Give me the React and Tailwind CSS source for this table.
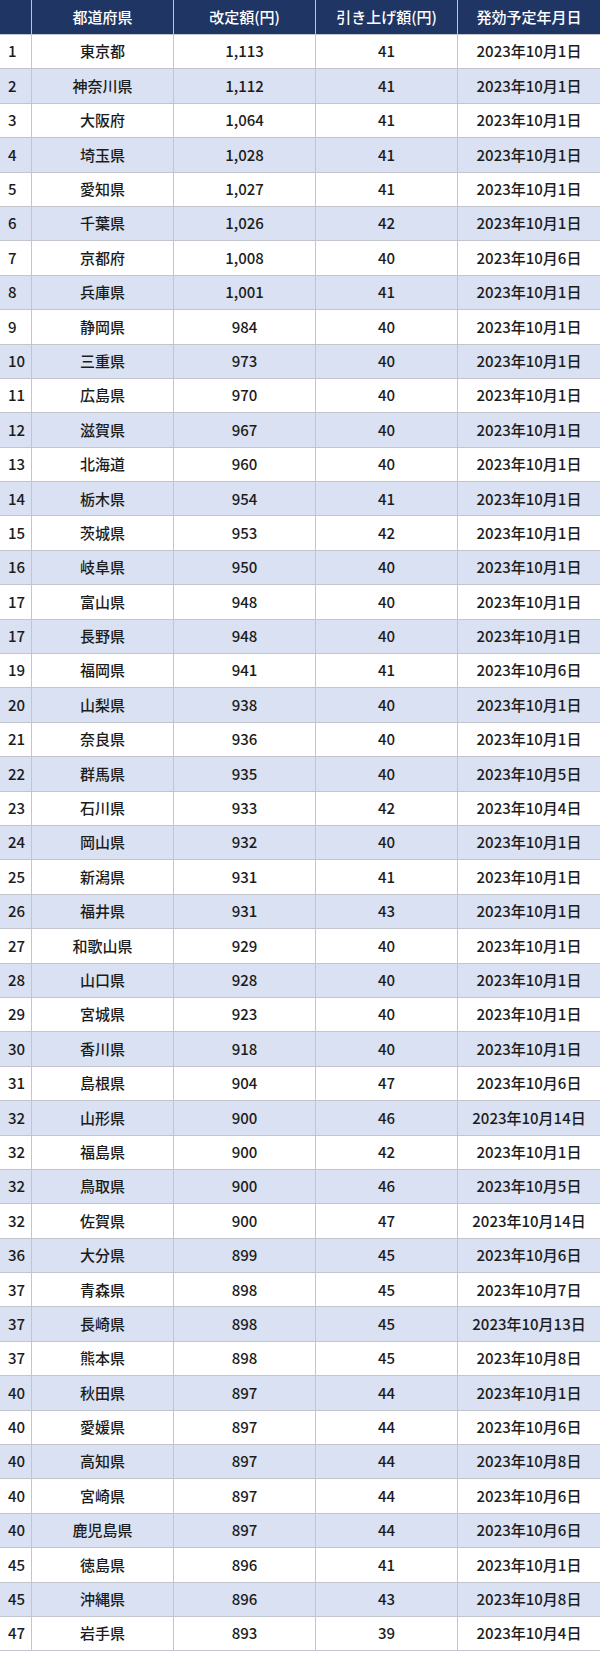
import React from "react";

const rows = [
  ["1", "東京都", "1,113", "41", "1"],
  ["2", "神奈川県", "1,112", "41", "1"],
  ["3", "大阪府", "1,064", "41", "1"],
  ["4", "埼玉県", "1,028", "41", "1"],
  ["5", "愛知県", "1,027", "41", "1"],
  ["6", "千葉県", "1,026", "42", "1"],
  ["7", "京都府", "1,008", "40", "6"],
  ["8", "兵庫県", "1,001", "41", "1"],
  ["9", "静岡県", "984", "40", "1"],
  ["10", "三重県", "973", "40", "1"],
  ["11", "広島県", "970", "40", "1"],
  ["12", "滋賀県", "967", "40", "1"],
  ["13", "北海道", "960", "40", "1"],
  ["14", "栃木県", "954", "41", "1"],
  ["15", "茨城県", "953", "42", "1"],
  ["16", "岐阜県", "950", "40", "1"],
  ["17", "富山県", "948", "40", "1"],
  ["17", "長野県", "948", "40", "1"],
  ["19", "福岡県", "941", "41", "6"],
  ["20", "山梨県", "938", "40", "1"],
  ["21", "奈良県", "936", "40", "1"],
  ["22", "群馬県", "935", "40", "5"],
  ["23", "石川県", "933", "42", "4"],
  ["24", "岡山県", "932", "40", "1"],
  ["25", "新潟県", "931", "41", "1"],
  ["26", "福井県", "931", "43", "1"],
  ["27", "和歌山県", "929", "40", "1"],
  ["28", "山口県", "928", "40", "1"],
  ["29", "宮城県", "923", "40", "1"],
  ["30", "香川県", "918", "40", "1"],
  ["31", "島根県", "904", "47", "6"],
  ["32", "山形県", "900", "46", "14"],
  ["32", "福島県", "900", "42", "1"],
  ["32", "鳥取県", "900", "46", "5"],
  ["32", "佐賀県", "900", "47", "14"],
  ["36", "大分県", "899", "45", "6"],
  ["37", "青森県", "898", "45", "7"],
  ["37", "長崎県", "898", "45", "13"],
  ["37", "熊本県", "898", "45", "8"],
  ["40", "秋田県", "897", "44", "1"],
  ["40", "愛媛県", "897", "44", "6"],
  ["40", "高知県", "897", "44", "8"],
  ["40", "宮崎県", "897", "44", "6"],
  ["40", "鹿児島県", "897", "44", "6"],
  ["45", "徳島県", "896", "41", "1"],
  ["45", "沖縄県", "896", "43", "8"],
  ["47", "岩手県", "893", "39", "4"],
];

const headers = ["", "都道府県", "改定額(円)", "引き上げ額(円)", "発効予定年月日"];

export default function App() {
  return (
    <div
      className="w-[600px] bg-white text-[15px] font-medium text-[#1c1c1c]"
      style={{ fontFamily: '"Noto Sans CJK JP", "Noto Sans", sans-serif' }}
    >
      <div className="grid grid-cols-[31px_141px_141px_141px_142px] gap-px bg-[#c2c6cc] pb-px">
        {headers.map((h, i) => (
          <div
            key={i}
            className="h-[34px] bg-[#1f3563] text-white flex items-center justify-center"
          >
            {h}
          </div>
        ))}
        {rows.map((r, idx) => {
          const bg = idx % 2 === 0 ? "bg-white" : "bg-[#d9e1f2]";
          return (
            <React.Fragment key={idx}>
              <div className={`h-[33.4px] ${bg} flex items-center pl-2`}>{r[0]}</div>
              <div className={`h-[33.4px] ${bg} flex items-center justify-center`}>{r[1]}</div>
              <div className={`h-[33.4px] ${bg} flex items-center justify-center`}>{r[2]}</div>
              <div className={`h-[33.4px] ${bg} flex items-center justify-center`}>{r[3]}</div>
              <div className={`h-[33.4px] ${bg} flex items-center justify-center`}>
                2023年10月{r[4]}日
              </div>
            </React.Fragment>
          );
        })}
      </div>
    </div>
  );
}
